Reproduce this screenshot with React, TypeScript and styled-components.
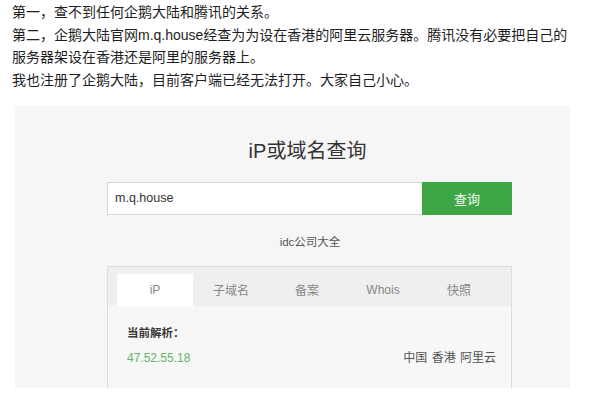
import React from "react";
import styled, { createGlobalStyle } from "styled-components";

const Global = createGlobalStyle`
  html, body { margin: 0; padding: 0; background: #fff; }
  body { font-family: "Liberation Sans", "Noto Sans CJK SC", sans-serif; }
`;

const Page = styled.div`
  width: 597px;
  height: 406px;
  overflow: hidden;
  background: #fff;
`;

const Article = styled.div`
  padding: 1px 0 0 12px;
  font-size: 14px;
  line-height: 22.7px;
  color: #1e1e1e;
`;

const Line = styled.p`
  margin: 0;
  white-space: nowrap;
`;

const Shot = styled.div`
  margin: 14px 0 0 15px;
  width: 555px;
  height: 282px;
  background: #f6f6f6;
  overflow: hidden;
  box-sizing: border-box;
  padding-left: 92px;
`;

const Column = styled.div`
  width: 405px;
  height: 100%;
  display: flex;
  flex-direction: column;
  align-items: center;
`;

const Title = styled.h1`
  margin: 30px 0 0 0;
  font-size: 20px;
  font-weight: normal;
  line-height: 30px;
  color: #333;
  padding-right: 4px;
`;

const SearchRow = styled.div`
  margin-top: 16px;
  display: flex;
  width: 100%;
  height: 33px;
`;

const Input = styled.div`
  flex: 1;
  box-sizing: border-box;
  border: 1px solid #d6d6d6;
  border-right: none;
  background: #fff;
  font-size: 12.5px;
  color: #333;
  display: flex;
  align-items: center;
  padding-left: 7px;
`;

const Button = styled.div`
  width: 90px;
  background: #3fa646;
  color: #f0f8f0;
  font-size: 13px;
  display: flex;
  align-items: center;
  justify-content: center;
`;

const Sub = styled.div`
  margin-top: 19px;
  font-size: 11.5px;
  color: #555;
  line-height: 16px;
  padding-left: 1px;
`;

const Box = styled.div`
  margin-top: 16px;
  width: 100%;
  flex: 1;
  box-sizing: border-box;
  border: 1px solid #dcdcdc;
  border-bottom: none;
  background: #f7f7f7;
`;

const Tabs = styled.div`
  display: flex;
  background: #efefef;
  padding: 7px 0 0 9px;
  height: 39px;
  box-sizing: border-box;
`;

const Tab = styled.div<{ $active?: boolean }>`
  width: 76px;
  display: flex;
  align-items: center;
  justify-content: center;
  font-size: 12px;
  color: #888;
  background: ${(p) => (p.$active ? "#fff" : "transparent")};
`;

const Body = styled.div`
  padding: 19px 15px 0 19px;
`;

const Label = styled.div`
  font-size: 11.5px;
  color: #3a3a3a;
  font-weight: bold;
  line-height: 16px;
`;

const ResultRow = styled.div`
  margin-top: 9px;
  display: flex;
  justify-content: space-between;
  font-size: 12px;
  line-height: 16px;
`;

const Ip = styled.span`
  color: #66b36a;
`;

const Loc = styled.span`
  color: #555;
  word-spacing: 1px;
`;

export default function App() {
  return (
    <Page>
      <Global />
      <Article>
        <Line>第一，查不到任何企鹅大陆和腾讯的关系。</Line>
        <Line>第二，企鹅大陆官网m.q.house经查为为设在香港的阿里云服务器。腾讯没有必要把自己的</Line>
        <Line>服务器架设在香港还是阿里的服务器上。</Line>
        <Line>我也注册了企鹅大陆，目前客户端已经无法打开。大家自己小心。</Line>
      </Article>
      <Shot>
        <Column>
          <Title>iP或域名查询</Title>
          <SearchRow>
            <Input>m.q.house</Input>
            <Button>查询</Button>
          </SearchRow>
          <Sub>idc公司大全</Sub>
          <Box>
            <Tabs>
              <Tab $active>iP</Tab>
              <Tab>子域名</Tab>
              <Tab>备案</Tab>
              <Tab>Whois</Tab>
              <Tab>快照</Tab>
            </Tabs>
            <Body>
              <Label>当前解析：</Label>
              <ResultRow>
                <Ip>47.52.55.18</Ip>
                <Loc>中国 香港 阿里云</Loc>
              </ResultRow>
            </Body>
          </Box>
        </Column>
      </Shot>
    </Page>
  );
}
